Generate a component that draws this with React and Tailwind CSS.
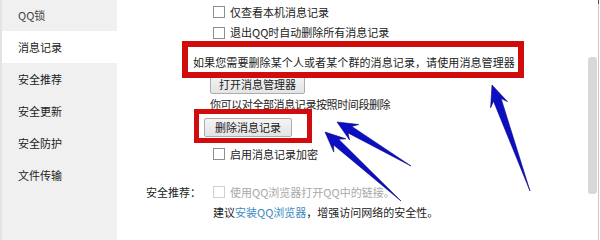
import React from "react";

function arrowPoints(tx, ty, hx, hy, headLen = 20, headHalf = 8, shaftHalf = 3.2) {
  const dx = hx - tx, dy = hy - ty;
  const L = Math.hypot(dx, dy);
  const ux = dx / L, uy = dy / L;
  const px = -uy, py = ux;
  const at = (d, w) => [hx - ux * d + px * w, hy - uy * d + py * w];
  const pts = [
    [hx, hy],
    at(headLen, headHalf),
    at(headLen * 0.75, shaftHalf),
    [tx, ty],
    at(headLen * 0.75, -shaftHalf),
    at(headLen, -headHalf),
  ];
  return pts.map((p) => p.map((v) => v.toFixed(1)).join(",")).join(" ");
}

function Checkbox({ disabled }) {
  return (
    <span
      className={`inline-block w-[12px] h-[12px] border bg-white shrink-0 ${
        disabled ? "border-[#cfcfcf]" : "border-[#8e8e8e]"
      }`}
    />
  );
}

function Btn({ children, className = "" }) {
  return (
    <span
      className={`inline-flex items-center justify-center h-[19px] border border-[#adadad] rounded-[2px] bg-gradient-to-b from-[#f4f4f4] to-[#e4e4e4] text-[#222] ${className}`}
    >
      {children}
    </span>
  );
}

export default function App() {
  const items = ["QQ锁", "消息记录", "安全推荐", "安全更新", "安全防护", "文件传输"];
  return (
    <div className="relative w-[600px] h-[240px] overflow-hidden bg-white flex font-['Noto_Sans_CJK_SC',sans-serif] text-[11px] leading-none text-[#222]">
      {/* sidebar */}
      <div className="w-[117px] h-full bg-[#f0f0f0] border-l-2 border-[#e3e3e3] flex flex-col">
        <div className="mt-[-1px] flex flex-col">
          {items.map((t, i) => (
            <div
              key={t}
              className={`h-[32px] flex items-center pl-[16px] ${
                i === 1 ? "bg-white" : ""
              } ${i === 0 ? "text-[#444]" : "text-[#222]"}`}
            >
              {t}
            </div>
          ))}
        </div>
      </div>

      {/* main */}
      <div className="flex-1 h-full flex flex-col pt-[2px]">
        <div className="h-[20px] flex items-center pl-[96px] gap-[5px]">
          <Checkbox />
          <span>仅查看本机消息记录</span>
        </div>
        <div className="h-[21px] flex items-center pl-[96px] gap-[5px]">
          <Checkbox />
          <span>退出QQ时自动删除所有消息记录</span>
        </div>
        <div className="h-[29px] flex items-end pb-[4px] pl-[76px] tracking-[0.1px]">
          如果您需要删除某个人或者某个群的消息记录，请使用消息管理器
        </div>
        <div className="h-[22px] flex items-end pl-[93px]">
          <Btn className="px-[8px]">打开消息管理器</Btn>
        </div>
        <div className="h-[20px] flex items-center pl-[93px] tracking-[-0.4px]">
          你可以对全部消息记录按照时间段删除
        </div>
        <div className="h-[23px] flex items-end pl-[87px]">
          <Btn className="w-[88px]">删除消息记录</Btn>
        </div>
        <div className="h-[27px] flex items-end pb-[4px] pl-[96px] gap-[5px]">
          <Checkbox />
          <span>启用消息记录加密</span>
        </div>
        <div className="h-[38px] flex items-end pb-[4px]">
          <span className="w-[96px] pl-[29px]">安全推荐：</span>
          <span className="flex items-center gap-[5px] text-[#a8a8a8]">
            <Checkbox disabled />
            <span>使用QQ浏览器打开QQ中的链接。</span>
          </span>
        </div>
        <div className="h-[21px] flex items-center pl-[96px]">
          <span>
            建议<span className="text-[#3a8cc0]">安装QQ浏览器</span>，增强访问网络的安全性。
          </span>
        </div>
      </div>

      {/* scrollbar */}
      <div className="absolute right-[1px] top-0 h-full w-[1px] bg-[#c9c9c9]" />
      <div className="absolute right-[1px] top-0 h-[4px] w-[1px] bg-[#555]" />
      <div className="absolute left-[588px] top-[57px] w-[9px] h-[137px] rounded-[3px] bg-[#d8d8d8]" />

      {/* red annotation boxes */}
      <div className="absolute left-[182px] top-[41px] w-[342px] h-[37px] border-[6px] border-[#d00c0c]" />
      <div className="absolute left-[194px] top-[109px] w-[118px] h-[34px] border-[5px] border-[#d00c0c]" />

      {/* blue arrows */}
      <svg className="absolute left-0 top-0" width="600" height="240" viewBox="0 0 600 240">
        <g fill="#0d0dc4" stroke="#08087a" strokeWidth="0.6" strokeLinejoin="round">
          <polygon points={arrowPoints(530, 191, 492, 85, 21, 9, 4)} />
          <polygon points={arrowPoints(411, 166, 337, 122, 20, 9, 3.8)} />
          <polygon points={arrowPoints(401, 201, 325, 132, 20, 9, 3.8)} />
        </g>
      </svg>
    </div>
  );
}
